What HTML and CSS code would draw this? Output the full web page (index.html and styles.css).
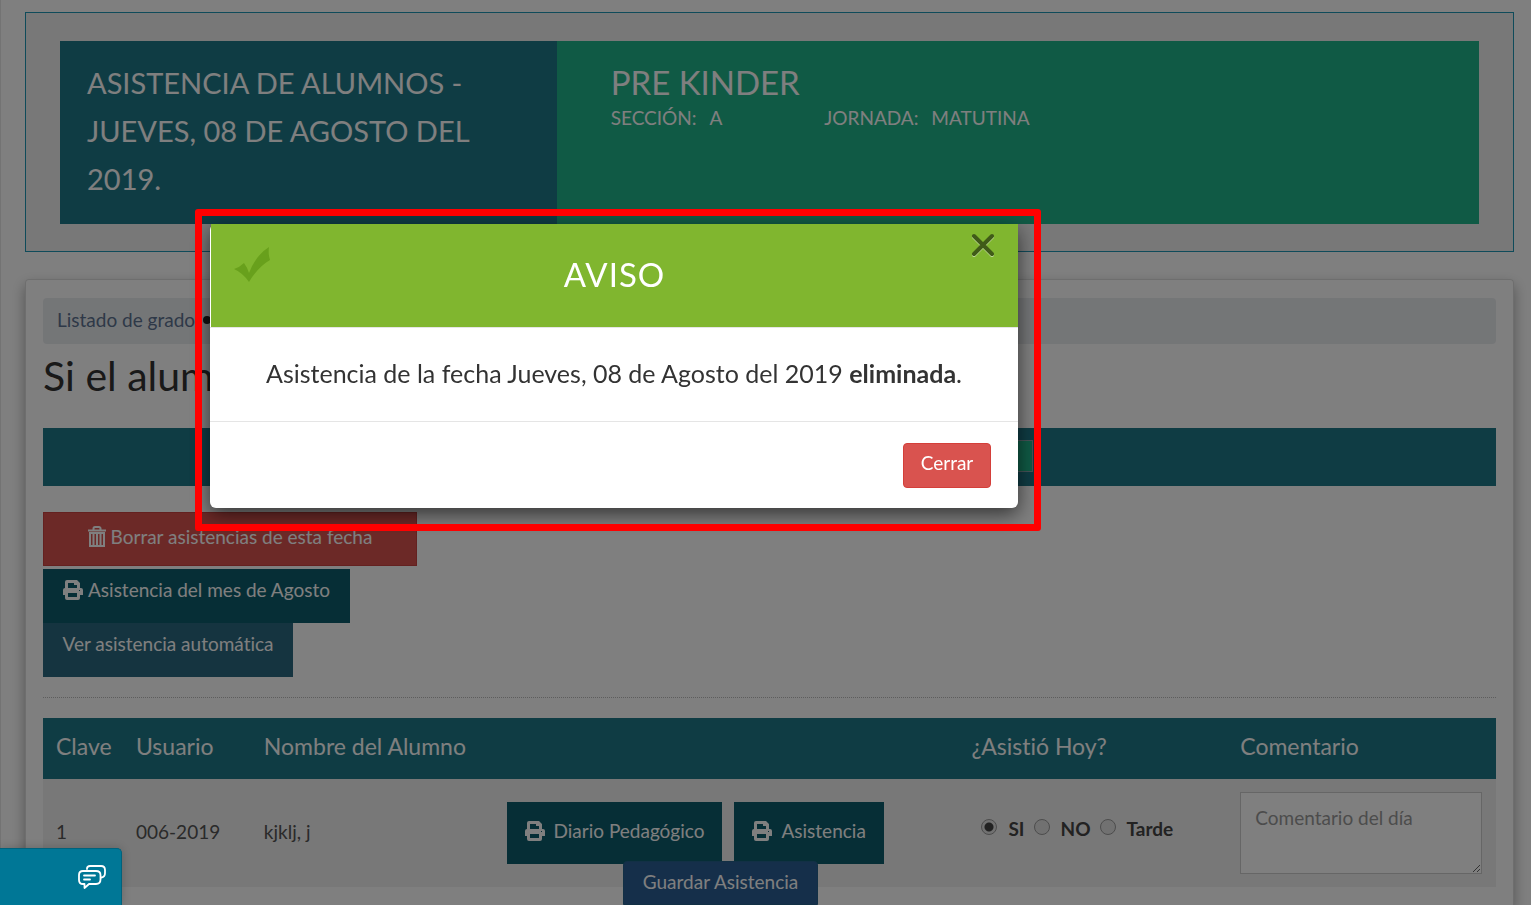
FILE: index.html
```html
<!DOCTYPE html>
<html lang="es">
<head>
<meta charset="utf-8">
<title>Asistencia de alumnos</title>
<link rel="stylesheet" href="styles.css">
</head>
<body>
<svg class="sprite" aria-hidden="true">
  <symbol id="printer" viewBox="0 0 20 20">
    <path fill="currentColor" fill-rule="evenodd" d="M4 0h10l3 3v5h1a2 2 0 0 1 2 2v5h-3v3a2 2 0 0 1-2 2H4a2 2 0 0 1-2-2v-3H0v-5a2 2 0 0 1 2-2V2a2 2 0 0 1 2-2zm1 3v5h9V5h-3V3zm0 10v4h9v-4zm11-3v1h1v-1z"/>
  </symbol>
</svg>

<main class="page">
  <section class="banner">
    <h2 class="banner-title">ASISTENCIA DE ALUMNOS -<br>JUEVES, 08 DE AGOSTO DEL<br>2019.</h2>
    <div class="banner-info">
      <h3 class="grade">PRE KINDER</h3>
      <div class="facts"><span class="fact">SECCIÓN: <b>A</b></span><span class="fact">JORNADA: <b>MATUTINA</b></span></div>
    </div>
  </section>

  <section class="card">
    <nav class="crumbs"><a href="#">Listado de grado</a><span class="dot"></span></nav>
    <h1 class="lead">Si el alumno</h1>
    <div class="datebar"><button class="datebox" type="button" aria-label="Fecha"></button></div>
    <div class="actions">
      <button class="btn danger" type="button"><svg class="trash" viewBox="0 0 18 22"><path fill="none" stroke="currentColor" stroke-width="2" d="M0 4.500h18M5.500 4V2.500a1.500 1.500 0 0 1 1.500-1.500h4a1.500 1.500 0 0 1 1.500 1.500V4M2 7v13h14V7zM5.500 7v13M9 7v13M12.500 7v13"/></svg>Borrar asistencias de esta fecha</button>
      <button class="btn dark" type="button"><svg class="printer"><use href="#printer"/></svg>Asistencia del mes de Agosto</button>
      <button class="btn blue" type="button">Ver asistencia automática</button>
    </div>
    <hr class="rule">
    <table class="students">
      <colgroup><col class="c-key"><col class="c-user"><col class="c-name"><col class="c-links"><col class="c-today"><col class="c-note"></colgroup>
      <thead>
        <tr><th>Clave</th><th>Usuario</th><th>Nombre del Alumno</th><th></th><th>¿Asistió Hoy?</th><th>Comentario</th></tr>
      </thead>
      <tbody>
        <tr>
          <td>1</td><td>006-2019</td><td>kjklj, j</td>
          <td><div class="links">
            <button class="btn dark tall" type="button"><svg class="printer"><use href="#printer"/></svg>Diario Pedagógico</button>
            <button class="btn dark tall" type="button"><svg class="printer"><use href="#printer"/></svg>Asistencia</button>
          </div></td>
          <td><div class="choices">
            <label class="choice"><input type="radio" name="today" checked>SI</label>
            <label class="choice"><input type="radio" name="today">NO</label>
            <label class="choice"><input type="radio" name="today">Tarde</label>
          </div></td>
          <td><textarea class="note" aria-label="Comentario" placeholder="Comentario del día"></textarea></td>
        </tr>
      </tbody>
    </table>
  </section>
</main>

<button class="save" type="button">Guardar Asistencia</button>
<div class="backdrop"></div>

<div class="modal" role="dialog" aria-labelledby="notice">
  <header class="modal-head">
    <svg class="check" viewBox="0 0 36 36"><path d="M0 22Q6 20 10 16Q13 20 15 26Q22 8 35 0Q34 7 36 13Q24 20 15 35Q9 26 0 22Z"/></svg>
    <h4 class="modal-title" id="notice">AVISO</h4>
    <button class="close" type="button" aria-label="Cerrar aviso"><svg viewBox="0 0 24 25"><g fill="none" stroke-width="4" stroke-linecap="round"><path class="x-light" d="M3 4l18 18M21 4L3 22"/><path class="x-dark" d="M3 3l18 18M21 3L3 21"/></g></svg></button>
  </header>
  <p class="modal-text">Asistencia de la fecha Jueves, 08 de Agosto del 2019 <strong>eliminada</strong>.</p>
  <footer class="modal-foot"><button class="dismiss" type="button">Cerrar</button></footer>
</div>
<div class="highlight"></div>

<button class="chat" type="button" aria-label="Chat"><svg viewBox="0 0 28 24" fill="none" stroke="currentColor" stroke-width="1.800" stroke-linejoin="round" stroke-linecap="round"><path d="M9 4V3.500Q9 1 12 1H23Q27 1 27 5V8Q27 12 23.500 12.500"/><path d="M5 6H18Q22.500 6 22.500 10V14.500Q22.500 19 18 19H11L6.500 23V19H5Q1 19 1 15V10Q1 6 5 6Z"/><path d="M6 10.500h11M6 14.500h6"/></svg></button>
</body>
</html>
```
FILE: styles.css
```css
* { box-sizing: border-box; }

body {
  margin: 0;
  height: 100vh;
  overflow: hidden;
  background: #fff;
  border-left: 1px solid #e6e6e6;
  color: #333;
  font-family: Lato, "Open Sans", sans-serif;
  font-size: 19px;
  font-variant-ligatures: none;
  line-height: 28px;
}

h1, h2, h3, h4, p { margin: 0; font-weight: 400; }
button { font: inherit; color: inherit; border: 0; }
.sprite { display: none; }

.page {
  display: flex;
  flex-direction: column;
  min-height: 100vh;
  padding: 12px 17px 0 24px;
}

.banner {
  display: flex;
  padding: 28px 34px 27px;
  border: 1px solid #1e96b4;
  background: #f0f0f0;
  color: #fff;
}
.banner-title {
  flex: 0 0 35%;
  padding: 18px 27px 21px;
  background: #1e7888;
  font-size: 29px;
  line-height: 48px;
}
.banner-info { flex: 1; padding: 22px 54px; background: #20b48a; }
.grade { font-size: 33px; line-height: 38px; }
.facts { display: flex; gap: 102px; line-height: 34px; }
.facts b { font-weight: 400; margin-left: 8px; }

.card {
  flex: 1;
  margin-top: 27px;
  padding: 18px 17px 17px;
  border: 1px solid #ddd;
  border-bottom: 0;
  border-radius: 4px 4px 0 0;
  box-shadow: 0 6px 14px rgba(0, 0, 0, .35);
}
.crumbs {
  display: flex;
  align-items: center;
  gap: 8px;
  height: 46px;
  padding: 0 14px 3px;
  border-radius: 4px;
  background: #e9ecef;
}
.crumbs a { color: #5d7290; text-decoration: none; }
.dot { width: 8px; height: 8px; border-radius: 50%; background: #222; }
.lead { margin-top: 6px; font-size: 41px; line-height: 52px; }
.datebar {
  display: flex;
  justify-content: center;
  align-items: center;
  height: 58px;
  margin-top: 26px;
  padding-bottom: 2px;
  background: #1e7888;
}
.datebox { width: 526px; height: 32px; border: 1px solid #8ea6b0; background: #20b48a; }

.actions { display: flex; flex-direction: column; align-items: flex-start; margin-top: 26px; }
.btn {
  display: flex;
  align-items: center;
  justify-content: center;
  gap: 5px;
  height: 54px;
  padding: 0 16px 13px;
  color: #fff;
  white-space: nowrap;
}
.danger { min-width: 374px; margin-bottom: 3px; padding-bottom: 4px; border: 1px solid #c94340; background: #d9534f; }
.dark { min-width: 307px; background: #0c5c6c; }
.blue { min-width: 250px; background: #2a6880; }
.tall { min-width: 0; height: 62px; padding: 0 18px 4px; gap: 9px; background: #0c5c6c; }
.printer { width: 20px; height: 20px; }
.trash { width: 18px; height: 22px; }
.rule { width: 100%; margin: 20px 0; border: 0; border-top: 1px dotted #bbb; }

.students { width: 100%; table-layout: fixed; border-collapse: collapse; }
.c-key { width: 80px; }
.c-user { width: 8.800%; }
.c-name { width: 16.700%; }
.c-links { width: 32%; }
.c-today { width: 18.500%; }
.students th {
  height: 61px;
  padding: 0 0 6px 13px;
  background: #1e7888;
  color: #fff;
  font-size: 23px;
  font-weight: 400;
  text-align: left;
  white-space: nowrap;
}
.students td { height: 108px; padding: 0 14px 0 13px; background: #f0f0f0; color: #555; }
.students td:nth-child(-n+3) { padding-bottom: 3px; }
.links { display: flex; gap: 12px; }
.choices { display: flex; gap: 9px; padding-bottom: 9px; color: #444; font-weight: 700; }
.choice { display: flex; align-items: center; gap: 11px; }
.choice input {
  appearance: none;
  width: 16px;
  height: 16px;
  margin: 0 0 4px;
  border: 1px solid #999;
  border-radius: 50%;
  background: #e2e2e2;
}
.choice input:checked { background: radial-gradient(circle, #444 0 4px, #e2e2e2 5px); }
.choice:first-child { padding-left: 10px; }
.note {
  display: block;
  width: 100%;
  height: 82px;
  padding: 11px 14px;
  border: 1px solid #ccc;
  background: #fff;
  font: inherit;
}
.note::placeholder { color: #999; opacity: 1; }

.save {
  position: fixed;
  left: 623px;
  bottom: 0;
  width: 195px;
  height: 44px;
  padding-bottom: 3px;
  border: 1px solid #24608a;
  border-radius: 4px 4px 0 0;
  background: #2a5e94;
  color: #fff;
}
.backdrop { position: fixed; inset: 0; background: rgba(0, 0, 0, .5); }

.modal {
  position: fixed;
  left: 210px;
  top: 224px;
  width: 808px;
  border-radius: 6px;
  background: #fff;
  box-shadow: 0 6px 20px rgba(0, 0, 0, .6);
}
.modal-head {
  display: flex;
  align-items: center;
  justify-content: center;
  height: 103px;
  margin-left: 1px;
  padding-bottom: 4px;
  background: #80b62f;
  color: #fff;
}
.modal-title { font-size: 33px; letter-spacing: 1px; }
.check { position: absolute; left: 24px; top: 23px; width: 36px; height: 36px; fill: #68a01c; }
.close { position: absolute; right: 23px; top: 9px; width: 24px; height: 25px; padding: 0; background: none; }
.close svg { display: block; }
.x-light { stroke: #bcd795; }
.x-dark { stroke: #405b18; }
.modal-text {
  height: 95px;
  padding-top: 31px;
  border-top: 1px solid #e5e5e5;
  border-bottom: 1px solid #e5e5e5;
  font-size: 25px;
  text-align: center;
}
.modal-foot { display: flex; justify-content: flex-end; padding: 21px 27px 20px; }
.dismiss {
  width: 88px;
  height: 45px;
  padding-bottom: 6px;
  border: 1px solid #d43f3a;
  border-radius: 4px;
  background: #d9534f;
  color: #fff;
}
.highlight {
  position: fixed;
  left: 195px;
  top: 209px;
  width: 846px;
  height: 322px;
  border: 7px solid #f00;
  border-radius: 3px;
  pointer-events: none;
}
.chat {
  position: fixed;
  left: 0;
  bottom: 0;
  width: 122px;
  height: 57px;
  padding: 0 15px 0 78px;
  border: 1px solid #00627c;
  border-width: 1px 1px 0 0;
  border-radius: 0 5px 0 0;
  background: #007796;
  color: #fff;
  box-shadow: 0 0 10px rgba(0, 0, 0, .2);
}
.chat svg { display: block; width: 28px; height: 24px; }
```
